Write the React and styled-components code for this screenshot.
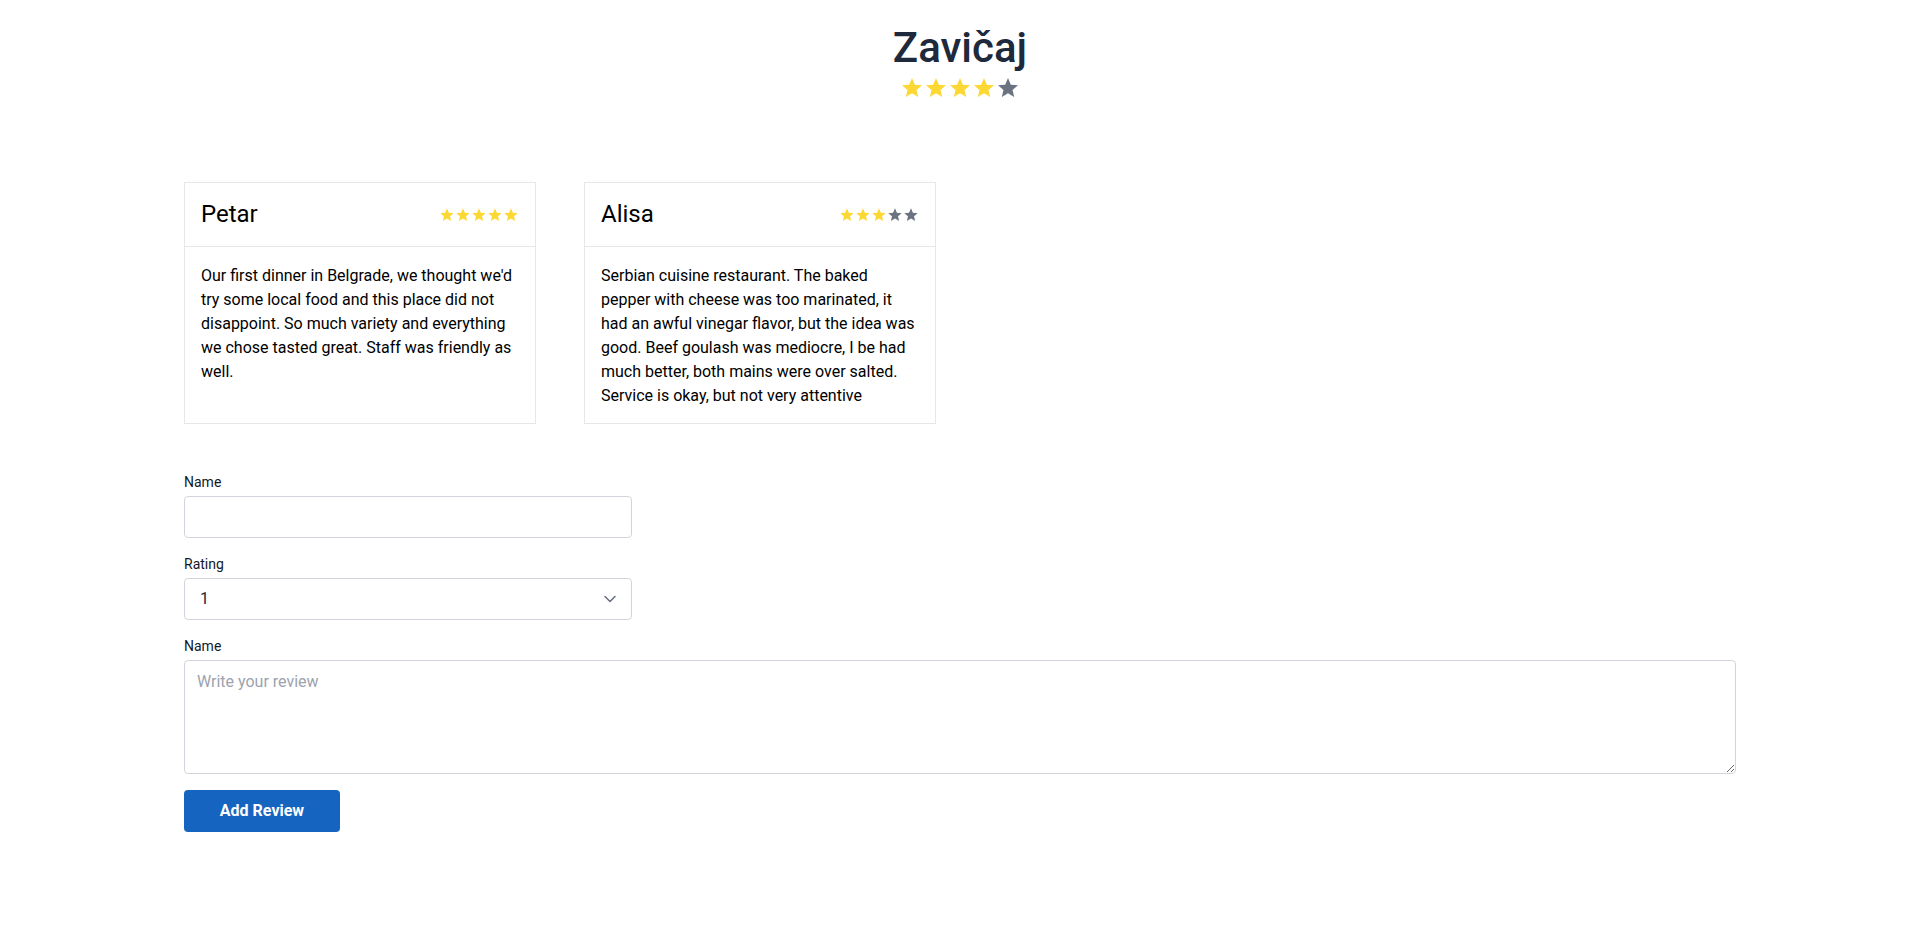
import React from "react";
import styled, { createGlobalStyle } from "styled-components";

const GlobalStyle = createGlobalStyle`
  * { box-sizing: border-box; }
  html, body { margin: 0; padding: 0; background: #ffffff; }
  body { font-family: Roboto, "Liberation Sans", Arial, sans-serif; color: #000; }
`;

const Page = styled.main`
  padding: 23px 184px 40px;
`;

const Header = styled.header`
  display: flex;
  flex-direction: column;
  align-items: center;
`;

const Title = styled.h1`
  margin: 0;
  font-size: 42px;
  line-height: 49px;
  font-weight: 500;
  color: #1e293b;
`;

const StarRow = styled.div`
  display: flex;
  margin-top: ${(p) => p.$mt || 0}px;
`;

const StarSvg = styled.svg`
  width: ${(p) => p.$size}px;
  height: ${(p) => p.$size}px;
  display: block;
  fill: ${(p) => (p.$on ? "#fdd835" : "#6b7280")};
`;

const Star = ({ on, size }) => (
  <StarSvg viewBox="0 0 24 24" $on={on} $size={size}>
    <path d="M12 17.27L18.18 21l-1.64-7.03L22 9.24l-7.19-.61L12 2 9.19 8.63 2 9.24l5.46 4.73L5.82 21z" />
  </StarSvg>
);

const Stars = ({ value, size, mt }) => (
  <StarRow $mt={mt}>
    {[1, 2, 3, 4, 5].map((i) => (
      <Star key={i} on={i <= value} size={size} />
    ))}
  </StarRow>
);

const Grid = styled.section`
  display: grid;
  grid-template-columns: repeat(4, 1fr);
  column-gap: 48px;
  margin-top: 82px;
`;

const Card = styled.article`
  border: 1px solid #e5e7eb;
  background: #fff;
`;

const CardHead = styled.div`
  display: flex;
  align-items: center;
  justify-content: space-between;
  padding: 16px;
  border-bottom: 1px solid #e5e7eb;
`;

const CardName = styled.h2`
  margin: 0;
  font-size: 24px;
  line-height: 31px;
  font-weight: 400;
  color: #000;
`;

const CardBody = styled.p`
  margin: 0;
  padding: 17px 16px 15px;
  font-size: 16px;
  line-height: 24px;
  color: #000;
`;

const Form = styled.form`
  display: flex;
  flex-direction: column;
  margin-top: 48px;
`;

const Field = styled.div`
  display: flex;
  flex-direction: column;
  gap: 4px;
  margin-bottom: 16px;
`;

const Label = styled.label`
  font-size: 14px;
  line-height: 20px;
  color: #111827;
`;

const Input = styled.input`
  width: 448px;
  height: 42px;
  padding: 8px 16px;
  font: 16px/24px Roboto, "Liberation Sans", sans-serif;
  color: #1e293b;
  border: 1px solid #d1d5db;
  border-radius: 4px;
  background: #fff;
  outline: none;
`;

const SelectWrap = styled.div`
  position: relative;
  width: 448px;
`;

const Select = styled.select`
  appearance: none;
  -webkit-appearance: none;
  width: 100%;
  height: 42px;
  padding: 8px 40px 8px 15px;
  font: 16px/24px Roboto, "Liberation Sans", sans-serif;
  color: #1e293b;
  border: 1px solid #d1d5db;
  border-radius: 4px;
  background: #fff;
  outline: none;
`;

const Chevron = styled.svg`
  position: absolute;
  right: 12px;
  top: 11px;
  width: 20px;
  height: 20px;
  pointer-events: none;
`;

const TextArea = styled.textarea`
  display: block;
  width: 100%;
  height: 114px;
  padding: 9px 12px 8px;
  font: 16px/24px Roboto, "Liberation Sans", sans-serif;
  color: #1e293b;
  border: 1px solid #d1d5db;
  border-radius: 4px;
  outline: none;
  &::placeholder { color: #9ca3af; }
`;

const Button = styled.button`
  align-self: flex-start;
  width: 156px;
  height: 42px;
  border: none;
  border-radius: 4px;
  background: #1565c0;
  color: #fff;
  font: 700 16px/24px Roboto, "Liberation Sans", sans-serif;
  cursor: pointer;
`;

const reviews = [
  {
    name: "Petar",
    rating: 5,
    text:
      "Our first dinner in Belgrade, we thought we'd try some local food and this place did not disappoint. So much variety and everything we chose tasted great. Staff was friendly as well.",
  },
  {
    name: "Alisa",
    rating: 3,
    text:
      "Serbian cuisine restaurant. The baked pepper with cheese was too marinated, it had an awful vinegar flavor, but the idea was good. Beef goulash was mediocre, I be had much better, both mains were over salted. Service is okay, but not very attentive",
  },
];

export default function App() {
  return (
    <>
      <GlobalStyle />
      <Page>
        <Header>
          <Title>Zavičaj</Title>
          <Stars value={4} size={24} mt={4} />
        </Header>
        <Grid>
          {reviews.map((r) => (
            <Card key={r.name}>
              <CardHead>
                <CardName>{r.name}</CardName>
                <Stars value={r.rating} size={16} />
              </CardHead>
              <CardBody>{r.text}</CardBody>
            </Card>
          ))}
        </Grid>
        <Form onSubmit={(e) => e.preventDefault()}>
          <Field>
            <Label htmlFor="name">Name</Label>
            <Input id="name" type="text" />
          </Field>
          <Field>
            <Label htmlFor="rating">Rating</Label>
            <SelectWrap>
              <Select id="rating" defaultValue="1">
                <option value="1">1</option>
                <option value="2">2</option>
                <option value="3">3</option>
                <option value="4">4</option>
                <option value="5">5</option>
              </Select>
              <Chevron viewBox="0 0 20 20" fill="none">
                <path d="M5 7.5l5 5 5-5" stroke="#6b7280" strokeWidth="1.6" strokeLinecap="round" strokeLinejoin="round" />
              </Chevron>
            </SelectWrap>
          </Field>
          <Field>
            <Label htmlFor="review">Name</Label>
            <TextArea id="review" placeholder="Write your review" />
          </Field>
          <Button type="submit">Add Review</Button>
        </Form>
      </Page>
    </>
  );
}
